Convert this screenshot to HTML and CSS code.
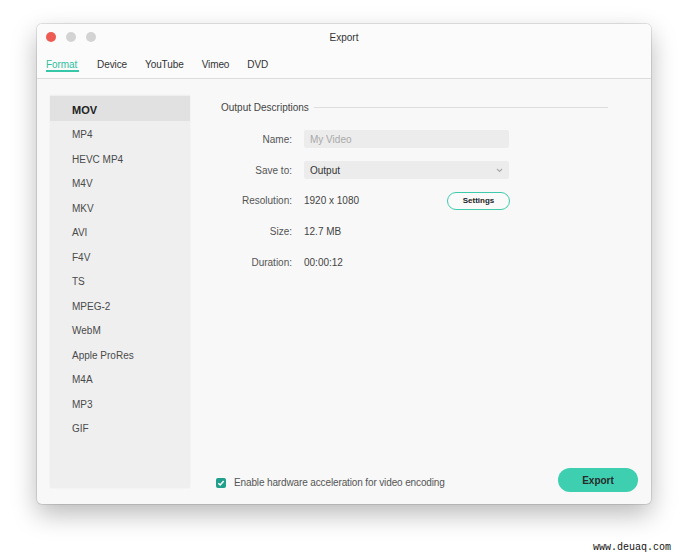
FILE: index.html
```html
<!DOCTYPE html>
<html>
<head>
<meta charset="utf-8">
<link rel="stylesheet" href="styles.css">
</head>
<body>
<div class="window">
  <div class="titlebar">
    <div class="lights">
      <span class="light red"></span>
      <span class="light grey"></span>
      <span class="light grey"></span>
    </div>
    <div class="title">Export</div>
  </div>
  <div class="tabs">
    <div class="tab active">Format</div>
    <div class="tab">Device</div>
    <div class="tab">YouTube</div>
    <div class="tab">Vimeo</div>
    <div class="tab">DVD</div>
  </div>
  <div class="content">
    <div class="sidebar">
      <div class="item selected">MOV</div>
      <div class="item">MP4</div>
      <div class="item">HEVC MP4</div>
      <div class="item">M4V</div>
      <div class="item">MKV</div>
      <div class="item">AVI</div>
      <div class="item">F4V</div>
      <div class="item">TS</div>
      <div class="item">MPEG-2</div>
      <div class="item">WebM</div>
      <div class="item">Apple ProRes</div>
      <div class="item">M4A</div>
      <div class="item">MP3</div>
      <div class="item">GIF</div>
    </div>
    <div class="main">
      <div class="heading"><span>Output Descriptions</span><span class="rule"></span></div>
      <div class="form">
        <div class="label">Name:</div>
        <div class="value"><div class="field placeholder">My Video</div></div>
        <div class="label">Save to:</div>
        <div class="value"><div class="field select"><span>Output</span>
          <svg width="7" height="5" viewBox="0 0 7 5"><polyline points="1,1 3.5,3.5 6,1" fill="none" stroke="#a8a8a8" stroke-width="1.1"/></svg></div></div>
        <div class="label">Resolution:</div>
        <div class="value split"><span>1920 x 1080</span><button class="settings">Settings</button></div>
        <div class="label">Size:</div>
        <div class="value">12.7 MB</div>
        <div class="label">Duration:</div>
        <div class="value">00:00:12</div>
      </div>
      <div class="footer">
        <label class="check">
          <span class="box"><svg width="8" height="8" viewBox="0 0 8 8"><polyline points="1.3,4.2 3.2,6 6.7,2" fill="none" stroke="#fff" stroke-width="1.5"/></svg></span>
          <span>Enable hardware acceleration for video encoding</span>
        </label>
        <button class="export">Export</button>
      </div>
    </div>
  </div>
</div>
<div class="watermark">www.deuaq.com</div>
</body>
</html>
```
FILE: styles.css
```css
html, body {
  margin: 0;
  padding: 0;
  background: #ffffff;
  font-family: "Liberation Sans", Arial, sans-serif;
  color: #333;
}
body {
  width: 688px;
  height: 557px;
  position: relative;
  overflow: hidden;
  padding-top: 24px;
  padding-left: 37px;
  box-sizing: border-box;
}
.window {
  width: 614px;
  height: 480px;
  background: #f8f8f8;
  border-radius: 5px;
  box-shadow: 0 0 0 1px rgba(0,0,0,0.10), 0 10px 26px rgba(0,0,0,0.28);
  display: flex;
  flex-direction: column;
  overflow: hidden;
}
.titlebar {
  height: 26px;
  position: relative;
  display: flex;
  align-items: center;
  justify-content: center;
  background: #fbfbfb;
}
.lights {
  position: absolute;
  left: 9px;
  top: 8px;
  display: flex;
  gap: 10px;
}
.light {
  width: 10px;
  height: 10px;
  border-radius: 50%;
  display: block;
}
.light.red { background: #ee5b53; }
.light.grey { background: #d3d3d3; }
.title {
  font-size: 10px;
  color: #333;
  margin-top: 1px;
}
.tabs {
  height: 29px;
  display: flex;
  padding-left: 9px;
  gap: 18px;
  background: #fbfbfb;
  border-bottom: 1px solid #dcdcdc;
  box-sizing: border-box;
}
.tab {
  font-size: 10px;
  letter-spacing: -0.1px;
  color: #333;
  padding-top: 9px;
  height: 22px;
  box-sizing: border-box;
}
.tab.active {
  color: #2fbf9f;
  border-bottom: 2px solid #36c7a8;
  padding-right: 2px;
}
.content {
  flex: 1;
  display: flex;
  padding: 16px 13px 16px 13px;
}
.sidebar {
  width: 140px;
  background: #efefef;
  padding-top: 1px;
  box-sizing: border-box;
  box-shadow: 0 0 2px rgba(0,0,0,0.05);
}
.item {
  height: 24.5px;
  padding: 4px 0 0 22px;
  box-sizing: border-box;
  display: flex;
  align-items: center;
  font-size: 10px;
  color: #4a4a4a;
}
.item.selected {
  background: #e1e1e1;
  font-weight: bold;
  font-size: 11px;
  color: #222;
}
.main {
  flex: 1;
  display: flex;
  flex-direction: column;
  padding-left: 26px;
  padding-top: 6px;
}
.heading {
  display: flex;
  align-items: center;
  gap: 5px;
  font-size: 10px;
  color: #444;
  margin-left: 5px;
  margin-right: 30px;
  height: 12px;
}
.rule {
  flex: 1;
  height: 1px;
  background: #dedede;
}
.form {
  margin-top: 11px;
  margin-left: 5px;
  display: grid;
  grid-template-columns: 71px 206px;
  grid-auto-rows: 30.8px;
  column-gap: 12px;
  font-size: 10px;
}
.label {
  text-align: right;
  color: #555;
  display: flex;
  align-items: center;
  justify-content: flex-end;
}
.value {
  display: flex;
  align-items: center;
  color: #444;
}
.value.split {
  justify-content: space-between;
}
.field {
  width: 205px;
  height: 18px;
  background: #ececec;
  border-radius: 2px;
  display: flex;
  align-items: center;
  padding: 0 6px;
  box-sizing: border-box;
}
.placeholder { color: #a9a9a9; }
.select {
  color: #333;
  justify-content: space-between;
}
.settings {
  width: 63px;
  height: 18px;
  border: 1.5px solid #3ecbac;
  border-radius: 9px;
  background: #fafafa;
  font-family: "Liberation Sans", Arial, sans-serif;
  font-weight: bold;
  font-size: 8px;
  color: #222;
  padding: 0;
}
.footer {
  margin-top: auto;
  margin-bottom: -4px;
  display: flex;
  align-items: center;
  justify-content: space-between;
}
.check {
  display: flex;
  align-items: center;
  gap: 8px;
  font-size: 10px;
  letter-spacing: -0.13px;
  color: #555;
  padding-top: 5px;
}
.box {
  width: 10px;
  height: 10px;
  background: #1f9f8c;
  border-radius: 2px;
  display: flex;
  align-items: center;
  justify-content: center;
}
.export {
  width: 80px;
  height: 24px;
  border: none;
  border-radius: 12px;
  background: #3dcfb0;
  font-family: "Liberation Sans", Arial, sans-serif;
  font-weight: bold;
  font-size: 10px;
  color: #2a2a2a;
  padding: 0;
}
.watermark {
  position: absolute;
  left: 593px;
  top: 542px;
  font-family: "Liberation Mono", "DejaVu Sans Mono", monospace;
  font-size: 10px;
  color: #111;
}
```
